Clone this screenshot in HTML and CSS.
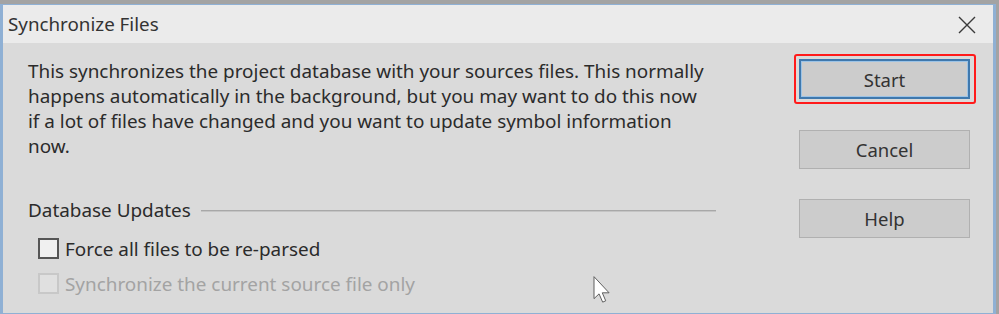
FILE: index.html
```html
<!DOCTYPE html>
<html lang="en">
<head>
    <meta charset="UTF-8">
    <title>Synchronize Files</title>
    <link rel="stylesheet" href="styles.css">
</head>
<body>
    <div class="window">
        <div class="titlebar">
            <span class="title">Synchronize Files</span>
            <svg class="close" width="18" height="18" viewBox="0 0 18 18">
                <path d="M1 1 L17 17 M17 1 L1 17" stroke="#3a3a3a" stroke-width="1.4" fill="none"/>
            </svg>
        </div>
        <div class="content">
            <div class="main">
                <p class="intro">This synchronizes the project database with your sources files. This normally<br>
                happens automatically in the background, but you may want to do this now<br>
                if a lot of files have changed and you want to update symbol information<br>
                now.</p>
                <div class="group-head">
                    <span>Database Updates</span>
                    <div class="rule"></div>
                </div>
                <label class="check"><span class="box"></span>Force all files to be re-parsed</label>
                <label class="check disabled"><span class="box"></span>Synchronize the current source file only</label>
            </div>
            <div class="buttons">
                <div class="focus-ring"><button class="btn default">Start</button></div>
                <button class="btn">Cancel</button>
                <button class="btn">Help</button>
            </div>
        </div>
        <svg class="cursor" width="20" height="28" viewBox="0 0 13 21">
            <path d="M0.5 0.5 L0.5 17 L4.3 13.4 L7 19.6 L9.3 18.6 L6.7 12.6 L11.8 12.6 Z" fill="#fff" stroke="#555" stroke-width="0.7" stroke-linejoin="round"/>
        </svg>
    </div>
</body>
</html>
```

FILE: styles.css
```css
body {
    margin: 0;
    background: #a3a3a3;
    font-family: "Noto Sans", "Open Sans", sans-serif;
    color: #2b2b2b;
}
.window {
    position: relative;
    width: 996px;
    height: 310px;
    margin-top: 4px;
    border: 1px solid #8fb0d4;
    border-left-width: 3px;
    border-right-width: 3px;
    background: #dadada;
    box-sizing: border-box;
}
.titlebar {
    height: 38px;
    background: #ebebeb;
    display: flex;
    align-items: center;
    justify-content: space-between;
    padding: 0 17px 0 5px;
}
.title {
    font-size: 18.8px;
    color: #333;
}
.close {
    margin-top: 1px;
}
.content {
    display: flex;
    padding: 16px 0 0 25px;
}
.main {
    width: 688px;
}
.intro {
    margin: 0;
    font-size: 18.9px;
    line-height: 25px;
    white-space: nowrap;
}
.group-head {
    display: flex;
    align-items: center;
    margin-top: 39px;
    font-size: 18.9px;
    line-height: 25px;
}
.rule {
    flex: 1;
    height: 1px;
    border-bottom: 1px solid #c4c4c4;
    background: #a8a8a8;
    margin-left: 10px;
}
.check {
    display: flex;
    align-items: center;
    height: 35px;
    font-size: 18.9px;
    margin-left: 10px;
}
.group-head + .check {
    margin-top: 8px;
}
.box {
    width: 17px;
    height: 17px;
    border: 2px solid #555;
    background: #f0f0f0;
    margin-right: 6px;
}
.disabled {
    color: #a3a3a3;
}
.disabled .box {
    border-color: #c8c8c8;
    background: #e0e0e0;
}
.buttons {
    display: flex;
    flex-direction: column;
    margin-left: 83px;
    padding-top: 1px;
}
.focus-ring {
    border: 2px solid #ff1a1a;
    border-radius: 3px;
    padding: 3px;
    margin: -6px 0 0 -5px;
    width: 172px;
}
.btn {
    width: 171px;
    height: 39px;
    background: #cccccc;
    border: 1px solid #b0b0b0;
    font-family: inherit;
    font-size: 18.5px;
    color: #333;
    padding: 0;
}
.btn.default {
    border: 2px solid #3f78ad;
    box-shadow: inset 0 0 0 1px #9cc3e6;
    height: 40px;
}
.buttons .btn + .btn {
    margin-top: 30px;
}
.focus-ring + .btn {
    margin-top: 26px;
}
.cursor {
    position: absolute;
    left: 589px;
    top: 271px;
}
```
